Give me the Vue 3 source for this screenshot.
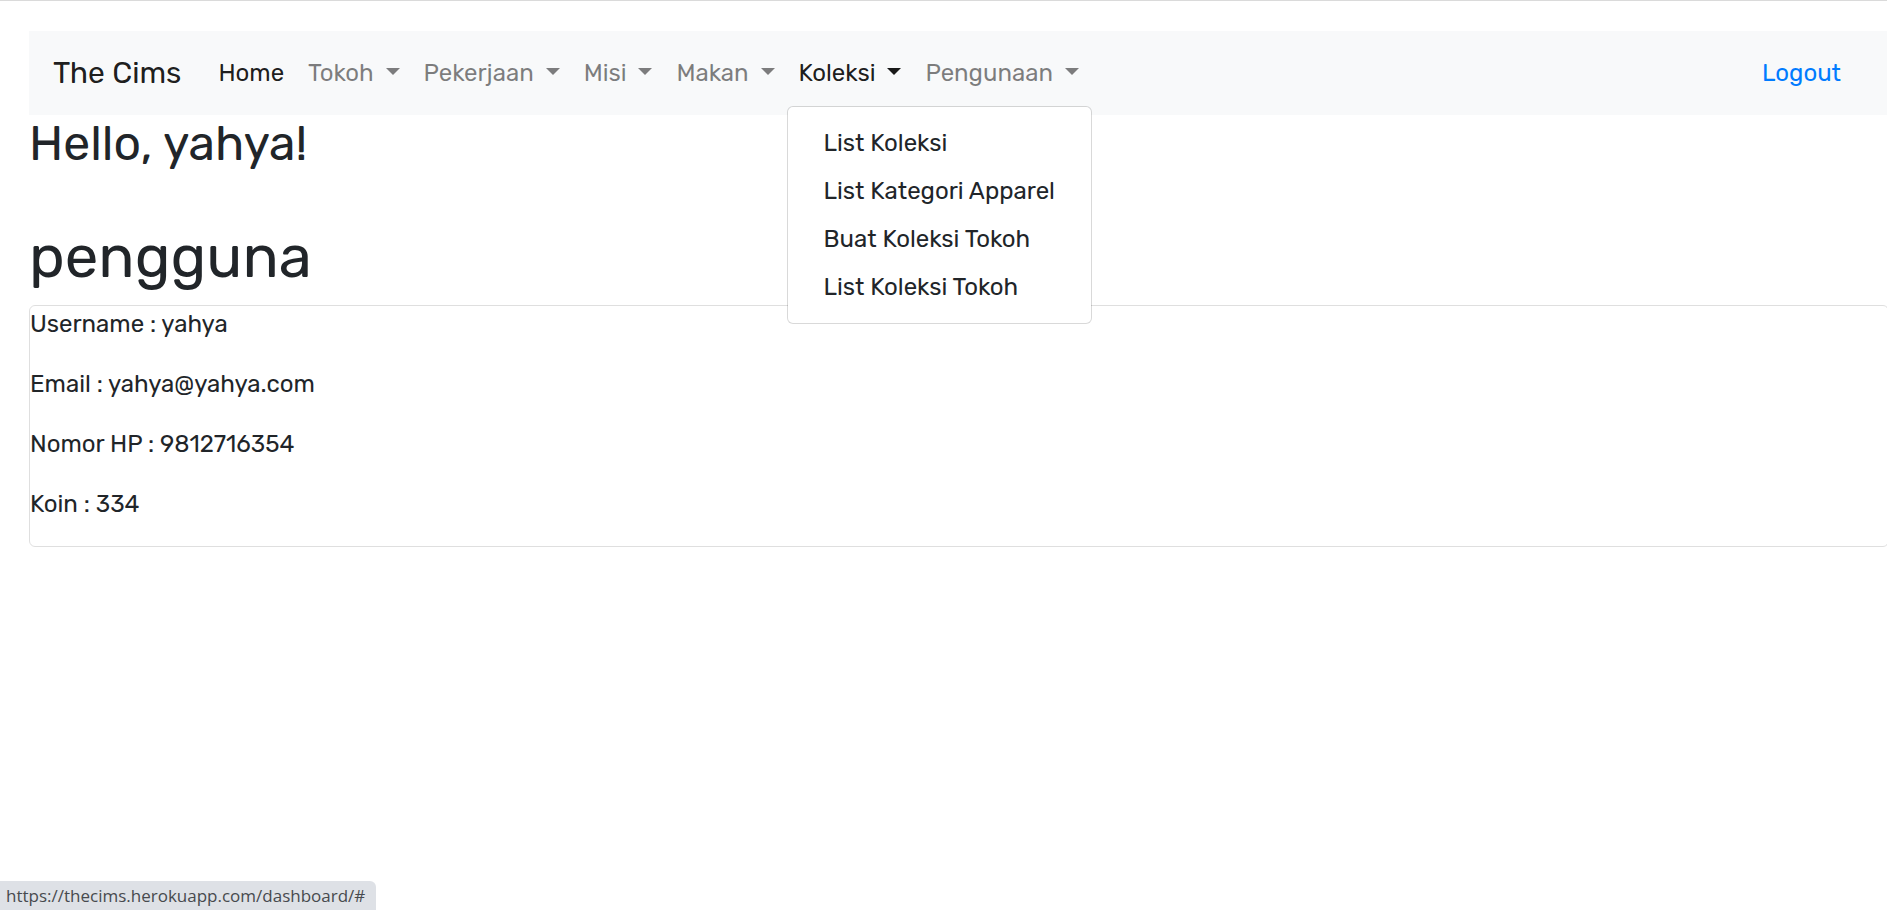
<script setup>
import { ref } from 'vue'

const open = ref('Koleksi')
const menus = ['Tokoh', 'Pekerjaan', 'Misi', 'Makan', 'Koleksi', 'Pengunaan']
const koleksi = ['List Koleksi', 'List Kategori Apparel', 'Buat Koleksi Tokoh', 'List Koleksi Tokoh']
const profile = [
  ['Username', 'yahya'],
  ['Email', 'yahya@yahya.com'],
  ['Nomor HP', '9812716354'],
  ['Koin', '334'],
]
</script>

<template>
  <div class="page">
    <nav class="navbar">
      <a class="brand" href="#">The Cims</a>
      <ul class="links">
        <li><a class="link active" href="#">Home</a></li>
        <li v-for="m in menus" :key="m" class="item">
          <a
            class="link"
            :class="{ active: open === m }"
            href="#"
            aria-haspopup="true"
            :aria-expanded="open === m"
            @click.prevent="open = open === m ? '' : m"
          >{{ m + ' ' }}<span class="caret"></span></a>
          <div v-if="m === 'Koleksi' && open === m" class="menu">
            <a v-for="k in koleksi" :key="k" class="entry" href="#">{{ k }}</a>
          </div>
        </li>
      </ul>
      <a class="logout" href="#">Logout</a>
    </nav>
    <main>
      <h2 class="hello">Hello, yahya!</h2>
      <h1 class="role">pengguna</h1>
      <section class="card">
        <p v-for="[k, v] in profile" :key="k">{{ k }} : {{ v }}</p>
      </section>
    </main>
    <div class="status">https://thecims.herokuapp.com/dashboard/#</div>
  </div>
</template>

<style>
body {
  margin: 0;
  background: #fff;
}
</style>

<style scoped>
.page {
  overflow-x: clip;
  border-top: 1px solid #dadada;
  padding: 30px 0 0 29px;
  font-family: Rubik, Roboto, "Liberation Sans", sans-serif;
  font-size: 24px;
  line-height: 36px;
  color: #212529;
}
a {
  text-decoration: none;
}
.navbar {
  display: flex;
  align-items: center;
  padding: 12px 24px;
  background: #f8f9fa;
}
.brand {
  margin-right: 25px;
  padding: 8px 0 7px;
  font-size: 30px;
  line-height: 45px;
  color: rgba(0, 0, 0, 0.9);
}
.links {
  display: flex;
  flex: 1;
  margin: 0;
  padding: 0;
  list-style: none;
}
.item {
  position: relative;
}
.link {
  display: block;
  padding: 12px;
  white-space: nowrap;
  color: rgba(0, 0, 0, 0.5);
}
.link.active {
  color: rgba(0, 0, 0, 0.9);
}
.caret {
  display: inline-block;
  margin-left: 6px;
  vertical-align: 6px;
  border-top: 7px solid;
  border-left: 7px solid transparent;
  border-right: 7px solid transparent;
}
.menu {
  position: absolute;
  top: 100%;
  left: 0;
  z-index: 10;
  margin-top: 3px;
  padding: 12px 0;
  border: 1px solid rgba(0, 0, 0, 0.15);
  border-radius: 6px;
  background: #fff;
  background-clip: padding-box;
}
.entry {
  display: block;
  padding: 6px 36px;
  white-space: nowrap;
  color: #212529;
}
.logout {
  margin-right: 22px;
  color: #007bff;
}
h1,
h2 {
  font-weight: 400;
}
.hello {
  margin: 0 0 48px;
  font-size: 48px;
  line-height: 58px;
}
.role {
  margin: 0 0 12px;
  font-size: 60px;
  line-height: 72px;
}
.card {
  margin-right: -2px;
  border: 1px solid rgba(0, 0, 0, 0.125);
  border-radius: 6px;
}
.card p {
  margin: 0 0 24px;
}
.status {
  position: fixed;
  left: 0;
  bottom: 0;
  padding: 3px 11px 2px 6px;
  border-top-right-radius: 6px;
  background: #dee1e6;
  color: #474a4e;
  font-family: "Segoe UI", "Open Sans", "Noto Sans", sans-serif;
  font-size: 17px;
  line-height: 24px;
}
</style>
